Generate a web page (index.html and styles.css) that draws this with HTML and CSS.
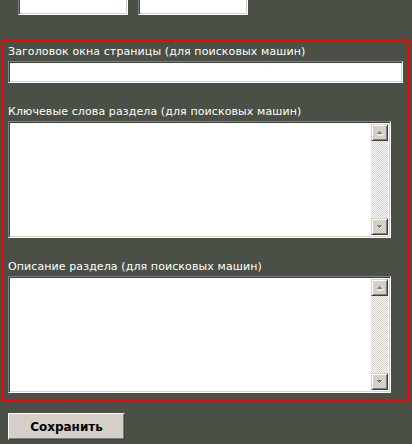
FILE: index.html
```html
<!DOCTYPE html>
<html>
<head>
  <title>Настройки раздела</title>
  <link rel="stylesheet" href="styles.css">
</head>
<body>
  <div class="top-row">
    <input class="small-field" type="text">
    <input class="small-field" type="text">
  </div>

  <div class="seo-box">
    <div class="field">
      <label>Заголовок окна страницы (для поисковых машин)</label>
      <input class="wide-field" type="text">
    </div>
    <div class="field">
      <label>Ключевые слова раздела (для поисковых машин)</label>
      <div class="memo">
        <textarea></textarea>
        <div class="scroll">
          <span class="scroll-btn">
            <svg width="9" height="6" viewBox="0 0 9 6"><path d="M2 5h6M8 4v1" stroke="#fff"/><path d="M4 1h1v1h1v1h1v1H2V3h1V2h1z" fill="#808080"/></svg>
          </span>
          <span class="track"></span>
          <span class="scroll-btn">
            <svg width="9" height="6" viewBox="0 0 9 6"><path d="M2 1h5v1H6v1H5v1H4V3H3V2H2z" fill="#808080"/><path d="M7.5 1v1M6.5 2v1M5.5 3v1M4.5 4v1" stroke="#fff"/></svg>
          </span>
        </div>
      </div>
    </div>
    <div class="field">
      <label>Описание раздела (для поисковых машин)</label>
      <div class="memo">
        <textarea></textarea>
        <div class="scroll">
          <span class="scroll-btn">
            <svg width="9" height="6" viewBox="0 0 9 6"><path d="M2 5h6M8 4v1" stroke="#fff"/><path d="M4 1h1v1h1v1h1v1H2V3h1V2h1z" fill="#808080"/></svg>
          </span>
          <span class="track"></span>
          <span class="scroll-btn">
            <svg width="9" height="6" viewBox="0 0 9 6"><path d="M2 1h5v1H6v1H5v1H4V3H3V2H2z" fill="#808080"/><path d="M7.5 1v1M6.5 2v1M5.5 3v1M4.5 4v1" stroke="#fff"/></svg>
          </span>
        </div>
      </div>
    </div>
  </div>

  <button class="save">Сохранить</button>
</body>
</html>
```

FILE: styles.css
```css
body {
  margin: 0;
  background-color: #4a5045;
  font-family: "DejaVu Sans", Verdana, sans-serif;
  font-size: 11px;
  color: #fff;
}
input, textarea {
  box-sizing: border-box;
  margin: 0;
  padding: 2px 3px;
  background: #fff;
  font-family: inherit;
  font-size: 11px;
  outline: none;
}
.small-field, .wide-field, .memo {
  border: 1px solid;
  border-color: #808080 #fff #fff #808080;
  box-shadow: inset 1px 1px #404040, inset -1px -1px #d4d0c8;
}
.top-row {
  display: flex;
  gap: 10px;
  padding-left: 18px;
  margin-top: -8px;
}
.small-field {
  width: 110px;
  height: 23px;
}
.seo-box {
  width: 399px;
  margin: 25px 0 0 1px;
  padding: 3px 0 6px 5px;
  border: 2px solid #f00;
}
.field + .field {
  margin-top: 22px;
}
.field label {
  display: block;
  line-height: 14px;
  margin-bottom: 2px;
  letter-spacing: 0.1px;
}
.wide-field {
  display: block;
  width: 395px;
  height: 22px;
}
.memo {
  display: flex;
  width: 383px;
  height: 117px;
  box-sizing: border-box;
  padding: 2px;
  background: #fff;
}
.memo textarea {
  flex: 1;
  border: none;
  resize: none;
  padding: 2px;
}
.scroll {
  display: flex;
  flex-direction: column;
  width: 17px;
}
.scroll-btn {
  display: flex;
  align-items: center;
  justify-content: center;
  height: 17px;
  box-sizing: border-box;
  background: #d4d0c8;
  border: 1px solid;
  border-color: #d4d0c8 #404040 #404040 #d4d0c8;
  box-shadow: inset 1px 1px #fff, inset -1px -1px #808080;
}
.track {
  flex: 1;
  background: repeating-conic-gradient(#d4d0c8 0 25%, #fff 0 50%) 0 0 / 2px 2px;
}
.save {
  display: block;
  margin: 12px 0 0 8px;
  width: 117px;
  height: 27px;
  background: #d4d0c8;
  border: 1px solid;
  border-color: #fff #404040 #404040 #fff;
  box-shadow: inset -1px -1px #808080;
  font-family: "DejaVu Sans", Verdana, sans-serif;
  font-size: 12px;
  font-weight: bold;
  color: #000;
  padding: 0;
}
```
